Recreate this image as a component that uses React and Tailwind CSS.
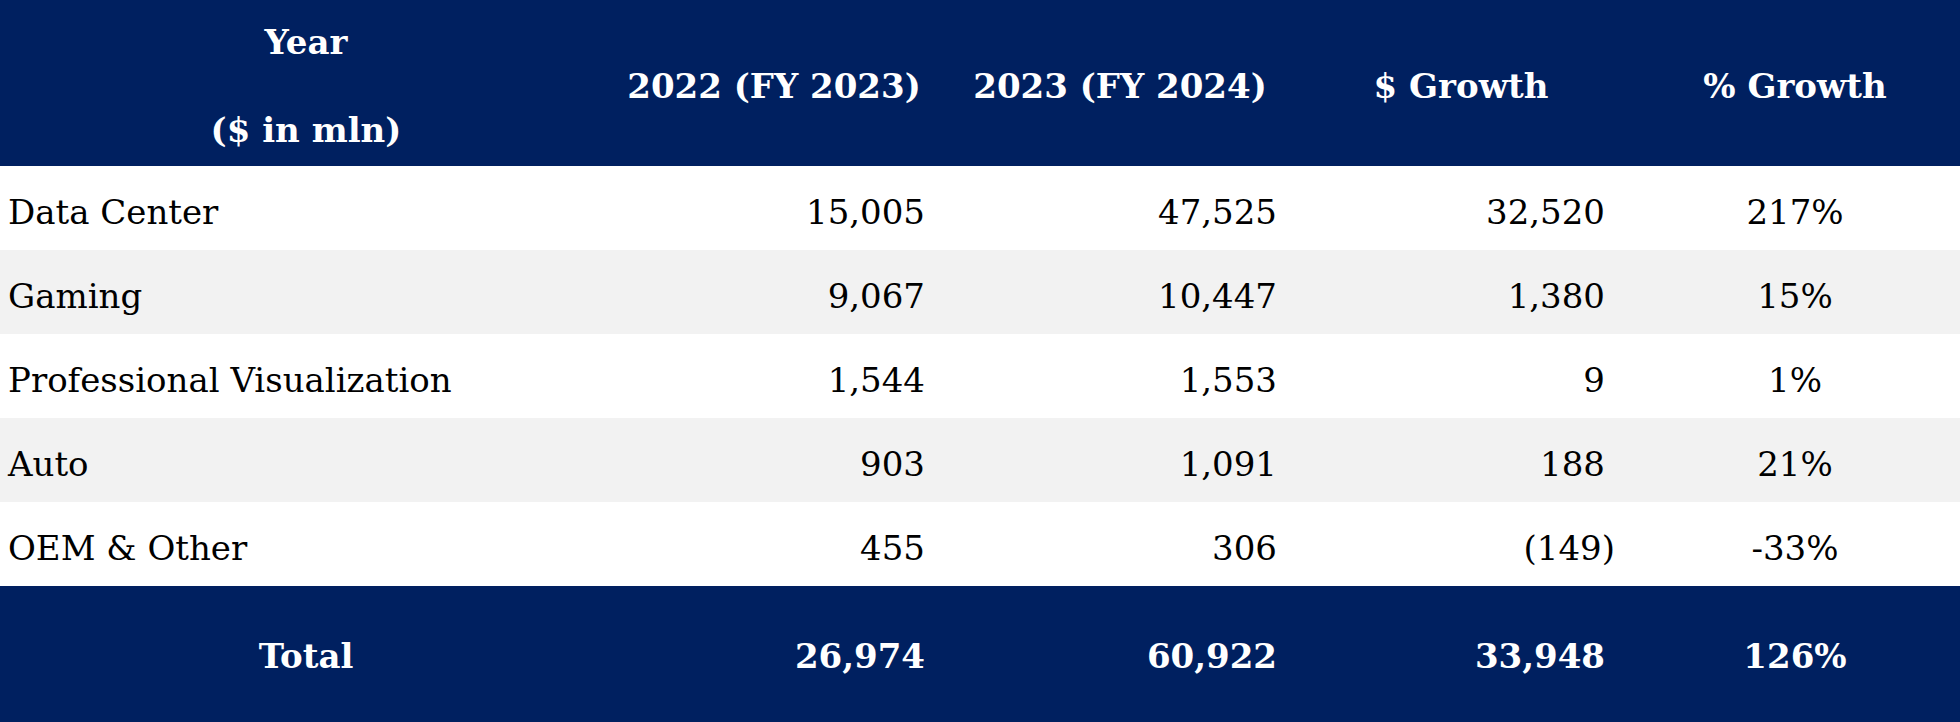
export default function App() {
  const rows = [
    ["Data Center", "15,005", "47,525", "32,520", "217%"],
    ["Gaming", "9,067", "10,447", "1,380", "15%"],
    ["Professional Visualization", "1,544", "1,553", "9", "1%"],
    ["Auto", "903", "1,091", "188", "21%"],
    ["OEM & Other", "455", "306", "(149)", "-33%"],
  ];
  const grid = "grid grid-cols-[612px_328px_360px_322px_1fr]";
  return (
    <div
      className="w-[1960px] h-[722px] bg-white overflow-hidden text-[34px] text-black"
      style={{ fontFamily: '"DejaVu Serif", serif' }}
    >
      <div className={`${grid} h-[166px] pt-[6px] bg-[#002060] text-white font-bold items-center`}>
        <div className="flex flex-col items-center gap-[44px] leading-[44px]">
          <span>Year</span>
          <span>($ in mln)</span>
        </div>
        <div className="text-center pr-[4px]">2022 (FY 2023)</div>
        <div className="text-center">2023 (FY 2024)</div>
        <div className="text-center">$ Growth</div>
        <div className="text-center pl-[8px]">% Growth</div>
      </div>
      {rows.map((r, i) => (
        <div
          key={r[0]}
          className={`${grid} h-[84px] pt-[8px] items-center ${i % 2 === 1 ? "bg-[#f2f2f2]" : "bg-white"}`}
        >
          <div className="pl-[8px]">{r[0]}</div>
          <div className="text-right pr-[15px]">{r[1]}</div>
          <div className="text-right pr-[23px]">{r[2]}</div>
          <div className={`text-right ${r[3].startsWith("(") ? "pr-[7px]" : "pr-[17px]"}`}>{r[3]}</div>
          <div className="text-center pl-[8px]">{r[4]}</div>
        </div>
      ))}
      <div className={`${grid} h-[136px] pt-[4px] bg-[#002060] text-white font-bold items-center`}>
        <div className="text-center">Total</div>
        <div className="text-right pr-[15px]">26,974</div>
        <div className="text-right pr-[23px]">60,922</div>
        <div className="text-right pr-[17px]">33,948</div>
        <div className="text-center pl-[8px]">126%</div>
      </div>
    </div>
  );
}
